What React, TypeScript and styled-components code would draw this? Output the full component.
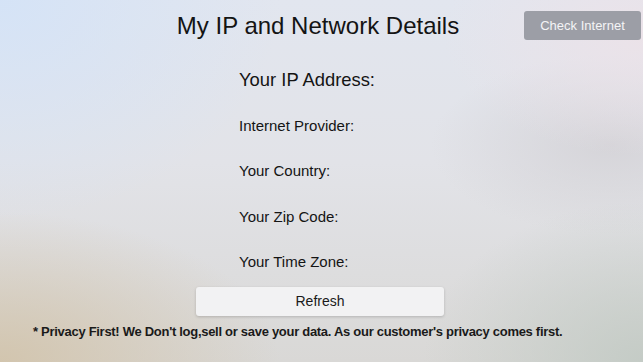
import React from "react";
import styled, { createGlobalStyle } from "styled-components";

const GlobalStyle = createGlobalStyle`
  html, body {
    margin: 0;
    padding: 0;
    width: 643px;
    height: 362px;
    overflow: hidden;
  }
  body {
    font-family: "Liberation Sans", Arial, sans-serif;
    color: #141414;
  }
`;

const Screen = styled.div`
  width: 643px;
  height: 362px;
  display: flex;
  flex-direction: column;
  box-sizing: border-box;
  background:
    radial-gradient(ellipse 280px 220px at 0% 0%, rgba(212, 227, 247, 0.95), rgba(212, 227, 247, 0) 100%),
    radial-gradient(ellipse 280px 150px at 0% 100%, rgba(210, 196, 172, 0.95), rgba(210, 196, 172, 0) 100%),
    radial-gradient(ellipse 220px 160px at 100% 100%, rgba(194, 202, 196, 0.9), rgba(194, 202, 196, 0) 100%),
    radial-gradient(ellipse 200px 120px at 100% 10%, rgba(236, 226, 232, 0.9), rgba(236, 226, 232, 0) 100%),
    radial-gradient(ellipse 180px 90px at 95% 40%, rgba(208, 206, 210, 0.7), rgba(208, 206, 210, 0) 100%),
    linear-gradient(180deg, #e2e6ef 0%, #e2e3e8 45%, #d9d8d6 100%);
`;

const Header = styled.header`
  height: 51px;
  padding-right: 7px;
  display: grid;
  grid-template-columns: 1fr auto 1fr;
  align-items: center;
`;

const Title = styled.h1`
  grid-column: 2;
  margin: 0;
  font-size: 24px;
  font-weight: 400;
  line-height: 28px;
`;

const CheckButton = styled.button`
  grid-column: 3;
  justify-self: end;
  margin-right: -5px;
  width: 117px;
  height: 29px;
  border: none;
  border-radius: 3px;
  background: #9c9ea6;
  color: #f4f4f6;
  font-family: "Liberation Sans", Arial, sans-serif;
  font-size: 13px;
  padding: 0;
`;

const Details = styled.div`
  margin-top: 6px;
  padding-left: 239px;
  display: flex;
  flex-direction: column;
`;

const Row = styled.div<{ $size: number }>`
  height: 45.5px;
  display: flex;
  align-items: center;
  font-size: ${(p) => p.$size}px;
`;

const RefreshButton = styled.button`
  align-self: center;
  margin-top: 2px;
  margin-left: -3px;
  width: 248px;
  height: 29px;
  border: none;
  border-radius: 3px;
  background: #f2f2f3;
  box-shadow: 0 1px 3px rgba(0, 0, 0, 0.18);
  color: #1a1a1a;
  font-family: "Liberation Sans", Arial, sans-serif;
  font-size: 14px;
  padding: 0;
`;

const Note = styled.p`
  margin: 8px 0 0 33px;
  font-size: 13px;
  font-weight: 700;
  letter-spacing: -0.29px;
  line-height: 16px;
  color: #1a1a1a;
`;

const rows = [
  { label: "Your IP Address:", size: 18.4 },
  { label: "Internet Provider:", size: 15 },
  { label: "Your Country:", size: 15 },
  { label: "Your Zip Code:", size: 15 },
  { label: "Your Time Zone:", size: 15 },
];

export default function App() {
  return (
    <>
      <GlobalStyle />
      <Screen>
        <Header>
          <Title>My IP and Network Details</Title>
          <CheckButton>Check Internet</CheckButton>
        </Header>
        <Details>
          {rows.map((r) => (
            <Row key={r.label} $size={r.size}>
              {r.label}
            </Row>
          ))}
        </Details>
        <RefreshButton>Refresh</RefreshButton>
        <Note>
          * Privacy First! We Don't log,sell or save your data. As our customer's privacy comes first.
        </Note>
      </Screen>
    </>
  );
}
